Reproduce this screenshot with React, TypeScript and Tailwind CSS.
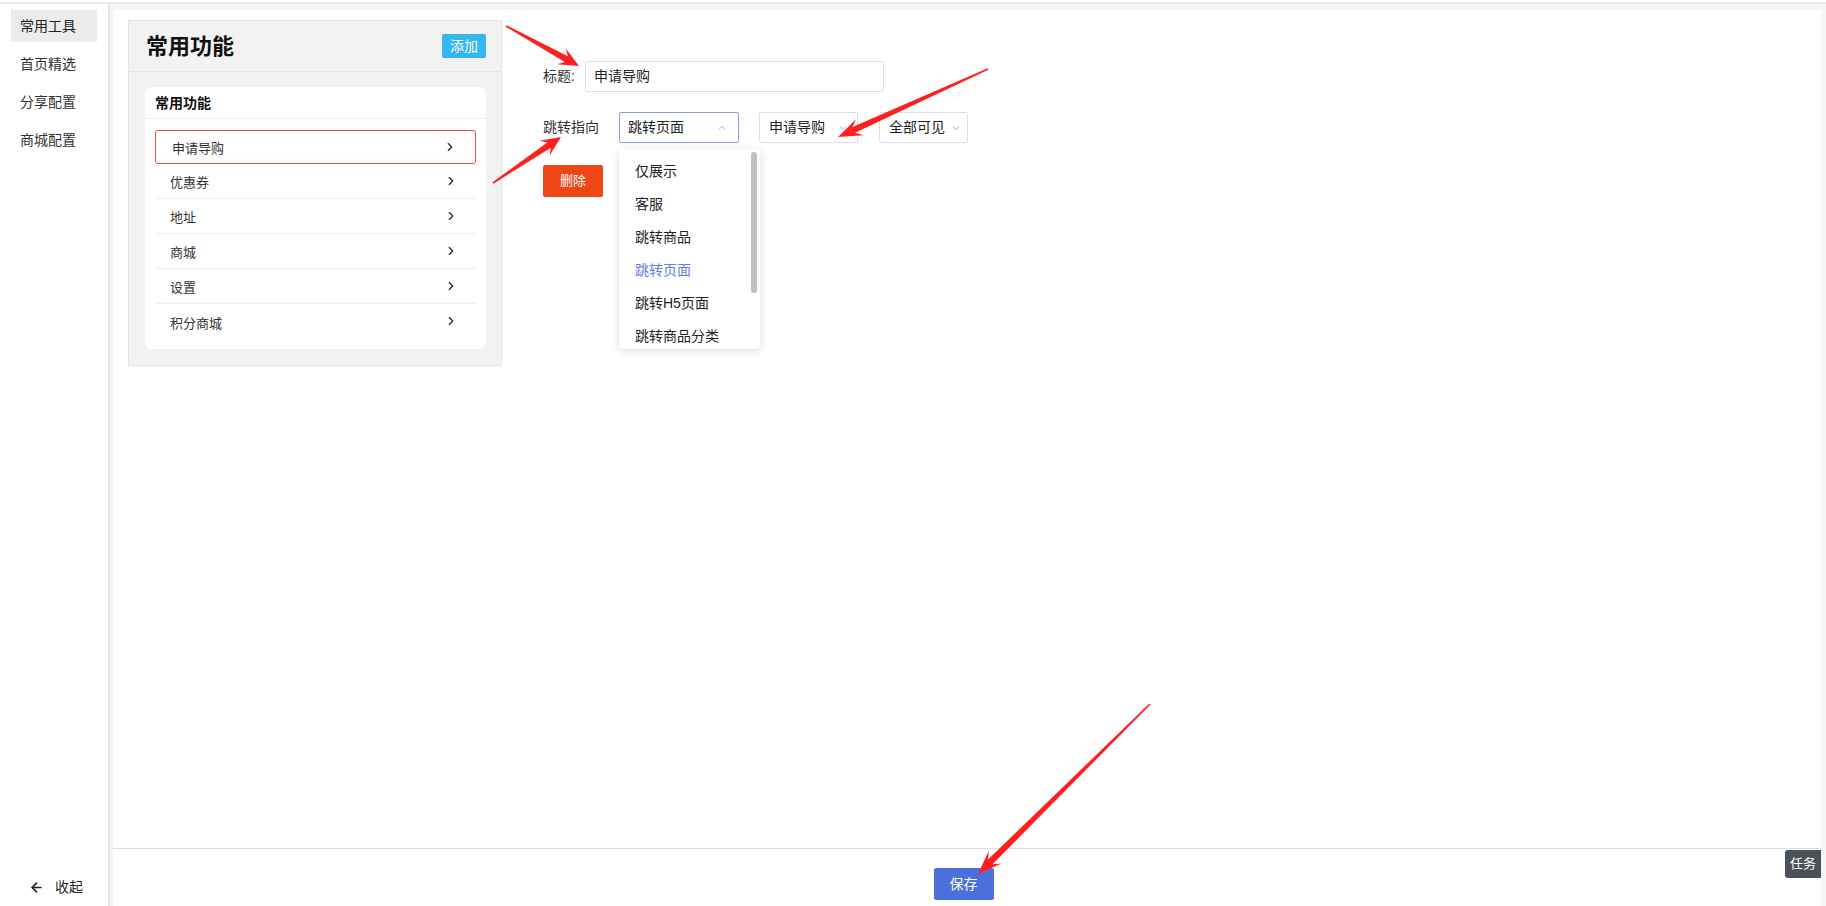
import React from 'react';
import { ChevronRight, ChevronUp, ChevronDown, ArrowLeft } from 'lucide-react';

const menu = ['常用工具', '首页精选', '分享配置', '商城配置'];
const features = ['申请导购', '优惠券', '地址', '商城', '设置', '积分商城'];
const jumpOptions = ['仅展示', '客服', '跳转商品', '跳转页面', '跳转H5页面', '跳转商品分类'];

// red annotation arrows, page pixel coordinates: [tailX, tailY, tipX, tipY]
const arrows: [number, number, number, number][] = [
  [506, 26, 579, 66],
  [493, 183, 561, 137],
  [988, 69, 838, 137],
  [1150, 704, 978, 874],
];

const arrowPoints = (x1: number, y1: number, x2: number, y2: number) => {
  const len = Math.hypot(x2 - x1, y2 - y1);
  const dx = (x2 - x1) / len;
  const dy = (y2 - y1) / len;
  const nx = -dy;
  const ny = dx;
  const head = len > 120 ? 24 : 20;
  const neck = head * 0.72;
  const pt = (d: number, w: number) => `${x2 - dx * d + nx * w},${y2 - dy * d + ny * w}`;
  return [
    pt(len, 0.8),
    pt(neck, 3.2),
    pt(head, 9),
    `${x2},${y2}`,
    pt(head, -9),
    pt(neck, -3.2),
    pt(len, -0.8),
  ].join(' ');
};

const App: React.FC = () => {
  return (
    <div className="relative flex h-[906px] w-full flex-col overflow-hidden bg-[#f5f5f5] font-['Liberation_Sans','Noto_Sans_CJK_SC',sans-serif] text-[#333]">
      <div className="h-[2px] bg-white" />
      <div className="h-[2px] bg-[#e9e9e9]" />

      <div className="flex min-h-0 flex-1">
        {/* sidebar */}
        <aside className="flex w-[110px] flex-col border-r-2 border-[#e6e6e6] bg-white pt-[6px]">
          <div className="flex flex-col gap-[6px] px-[11px]">
            {menu.map((item, i) => (
              <div
                key={item}
                className={`flex h-[32px] items-center pl-[9px] text-[14px] ${
                  i === 0 ? 'bg-[#ebebeb] text-[#222]' : 'text-[#333]'
                }`}
              >
                {item}
              </div>
            ))}
          </div>
          <div className="mt-auto flex h-[38px] items-center gap-[11px] pl-[29px] text-[14px] text-[#222]">
            <ArrowLeft size={15} strokeWidth={2.6} />
            收起
          </div>
        </aside>

        {/* main */}
        <div className="flex min-w-0 flex-1 flex-col pl-[3px] pr-[5px] pt-[6px]">
          <div className="flex min-h-0 flex-1 flex-col bg-white">
            <div className="flex flex-1 items-start pl-[15px] pt-[10px]">
              {/* feature panel */}
              <div className="h-[346px] w-[374px] border border-[#e3e3e3] bg-[#f2f2f2]">
                <div className="flex h-[51px] items-center justify-between border-b border-[#e2e2e2] pl-[17px] pr-[15px]">
                  <span className="text-[22px] font-bold text-[#111]">常用功能</span>
                  <button className="h-[24px] w-[44px] rounded-[2px] bg-[#33b6f2] text-[14px] text-white">添加</button>
                </div>
                <div className="ml-[16px] mt-[15px] h-[262px] w-[341px] rounded-[6px] bg-white">
                  <div className="flex h-[32px] items-center border-b border-[#eeeeee] pl-[10px] pt-[2px] text-[14px] font-bold text-[#111]">
                    常用功能
                  </div>
                  <div className="px-[10px] pt-[11px]">
                    {features.map((f, i) => (
                      <div
                        key={f}
                        className={`flex items-center justify-between pr-[18px] text-[13px] text-[#333] ${
                          i === 0
                            ? 'h-[34px] rounded-[3px] border border-[#f04848] pl-[16px]'
                            : `h-[35px] pl-[15px] ${i < features.length - 1 ? 'border-b border-[#eeeeee]' : ''}`
                        }`}
                      >
                        <span className="pt-[4px]">{f}</span>
                        <ChevronRight size={14} strokeWidth={2} className="-mt-[1px] text-[#222]" />
                      </div>
                    ))}
                  </div>
                </div>
              </div>

              {/* edit form */}
              <div className="ml-[41px] mt-[41px] text-[14px]">
                <div className="flex items-center">
                  <span className="w-[42px] text-[#333]">标题:</span>
                  <div className="flex h-[31px] w-[299px] items-center rounded-[2px] border border-[#dcdfe6] pl-[8px] text-[#222]">
                    申请导购
                  </div>
                </div>

                <div className="mt-[20px] flex items-center">
                  <span className="w-[76px] text-[#333]">跳转指向</span>
                  <div className="relative">
                    <div className="flex h-[31px] w-[120px] items-center justify-between rounded-[2px] border border-[#8a9bec] pl-[8px] pr-[10px] text-[#222]">
                      跳转页面
                      <ChevronUp size={12} strokeWidth={1.6} className="text-[#999]" />
                    </div>
                    <div className="absolute left-0 top-[37px] z-10 flex h-[200px] w-[141px] overflow-hidden rounded-[4px] bg-white shadow-[0_2px_10px_rgba(0,0,0,0.14)]">
                      <div className="flex-1 pt-[6px]">
                        {jumpOptions.map((o) => (
                          <div
                            key={o}
                            className={`flex h-[33px] items-center pl-[16px] text-[14px] ${
                              o === '跳转页面' ? 'text-[#5f7ee6]' : 'text-[#222]'
                            }`}
                          >
                            {o}
                          </div>
                        ))}
                      </div>
                      <div className="mr-[3px] mt-[3px] h-[141px] w-[6px] rounded-full bg-[#c1c1c1]" />
                    </div>
                  </div>
                  <div className="ml-[20px] flex h-[31px] w-[99px] items-center justify-between rounded-[2px] border border-[#dcdfe6] pl-[9px] pr-[8px] text-[#222]">
                    申请导购
                    <ChevronDown size={12} strokeWidth={1.6} className="text-[#999]" />
                  </div>
                  <div className="ml-[21px] flex h-[31px] w-[89px] items-center gap-[5px] rounded-[2px] border border-[#dcdfe6] pl-[9px] text-[#222]">
                    全部可见
                    <ChevronDown size={12} strokeWidth={1.6} className="text-[#999]" />
                  </div>
                </div>

                <button className="mt-[22px] h-[32px] w-[60px] rounded-[2px] bg-[#ee4616] text-[13px] text-white">删除</button>
              </div>
            </div>

            {/* footer */}
            <div className="flex h-[58px] justify-center border-t border-[#dcdcdc] pr-[7px] pt-[19px]">
              <button className="h-[32px] w-[60px] rounded-[2px] bg-[#4b70dc] text-[14px] text-white">保存</button>
            </div>
          </div>
        </div>
      </div>

      <div className="absolute bottom-[28px] right-[5px] flex h-[28px] w-[36px] items-center justify-center rounded-l-[3px] bg-[#4b5059] text-[13px] text-white">
        任务
      </div>

      <svg className="pointer-events-none absolute left-0 top-0" width={1826} height={906}>
        {arrows.map(([a, b, c, d], i) => (
          <polygon key={i} points={arrowPoints(a, b, c, d)} fill="#ff1f1f" />
        ))}
      </svg>
    </div>
  );
};

export default App;
